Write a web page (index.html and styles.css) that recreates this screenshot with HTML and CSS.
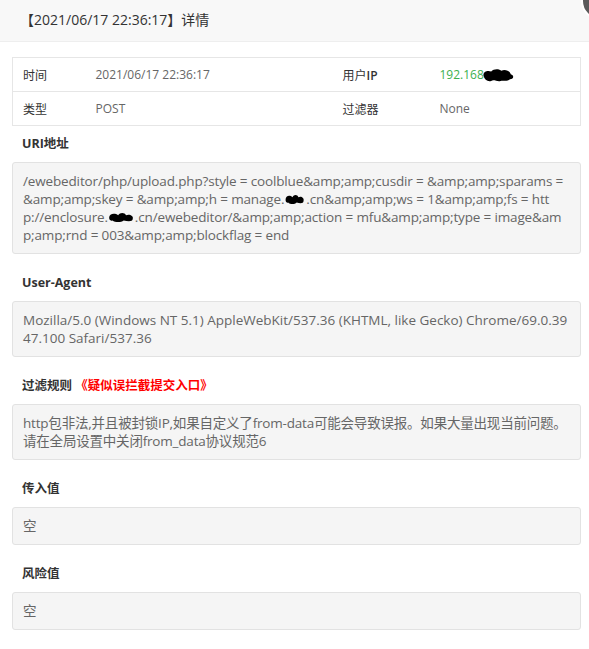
FILE: index.html
```html
<!DOCTYPE html>
<html lang="zh-CN">
<head>
    <meta charset="UTF-8">
    <meta name="viewport" content="width=device-width, initial-scale=1.0">
    <title>详情</title>
    <link rel="stylesheet" href="styles.css">
</head>
<body>
    <div class="layer">
        <div class="layer-title">【2021/06/17 22:36:17】详情</div>
        <span class="layer-close"></span>
        <div class="layer-content">
            <table class="info-table">
                <colgroup>
                    <col class="c1">
                    <col class="c2">
                    <col class="c3">
                    <col class="c4">
                </colgroup>
                <tbody>
                    <tr>
                        <td class="label">时间</td>
                        <td>2021/06/17 22:36:17</td>
                        <td class="label">用户<b>IP</b></td>
                        <td class="ip">192.168<svg class="blot blot-ip" viewBox="0 0 40 16"><path d="M3 9 C2 4 8 2 12 4 C15 0 22 1 24 3 C28 1 34 3 35 7 C39 8 39 13 34 13 C31 16 26 14 23 15 C19 16 15 13 12 15 C8 16 4 14 3 9 Z"/></svg></td>
                    </tr>
                    <tr>
                        <td class="label">类型</td>
                        <td>POST</td>
                        <td class="label">过滤器</td>
                        <td>None</td>
                    </tr>
                </tbody>
            </table>

            <div class="field">
                <div class="field-label">URI地址</div>
                <div class="field-box uri">/ewebeditor/php/upload.php?style = coolblue&amp;amp;amp;cusdir = &amp;amp;amp;sparams = &amp;amp;amp;skey = &amp;amp;amp;h = manage.<svg class="blot" viewBox="0 0 24 14"><path d="M1 8 C1 3 6 2 9 5 C11 1 15 2 16 5 C19 3 23 6 22 9 C22 13 17 12 14 11 C11 14 6 13 4 11 C2 12 1 10 1 8 Z"/></svg>.cn&amp;amp;amp;ws = 1&amp;amp;amp;fs = http://enclosure.<svg class="blot blot-wide" viewBox="0 0 24 14" preserveAspectRatio="none"><path d="M1 8 C1 3 6 2 9 5 C11 1 15 2 16 5 C19 3 23 6 22 9 C22 13 17 12 14 11 C11 14 6 13 4 11 C2 12 1 10 1 8 Z"/></svg>.cn/ewebeditor/&amp;amp;amp;action = mfu&amp;amp;amp;type = image&amp;amp;amp;rnd = 003&amp;amp;amp;blockflag = end</div>
            </div>

            <div class="field">
                <div class="field-label">User-Agent</div>
                <div class="field-box">Mozilla/5.0 (Windows NT 5.1) AppleWebKit/537.36 (KHTML, like Gecko) Chrome/69.0.3947.100 Safari/537.36</div>
            </div>

            <div class="field">
                <div class="field-label">过滤规则 <span class="rule-name">《疑似误拦截提交入口》</span></div>
                <div class="field-box rule-text">http包非法,并且被封锁IP,如果自定义了from-data可能会导致误报。如果大量出现当前问题。请在全局设置中关闭from_data协议规范6</div>
            </div>

            <div class="field">
                <div class="field-label">传入值</div>
                <div class="field-box">空</div>
            </div>

            <div class="field">
                <div class="field-label">风险值</div>
                <div class="field-box">空</div>
            </div>
        </div>
    </div>
</body>
</html>
```

FILE: styles.css
```css
* {
    box-sizing: border-box;
}
body {
    margin: 0;
    background: #fff;
    font-family: "Open Sans", "Noto Sans CJK SC", sans-serif;
    color: #333;
    overflow: hidden;
}
.layer {
    position: relative;
    width: 589px;
}
.layer-title {
    height: 42px;
    line-height: 40px;
    padding: 0 80px 0 20px;
    background: #f8f8f8;
    border-bottom: 1px solid #eee;
    font-size: 14px;
    color: #333;
}
.layer-close {
    position: absolute;
    left: 581px;
    top: -18px;
    width: 38px;
    height: 38px;
    border-radius: 50%;
    background: #5a5a5a;
    border: 2px solid #fff;
}
.layer-content {
    padding: 15px 8px 0 12px;
}
.info-table {
    width: 100%;
    border-collapse: collapse;
    border: 1px solid #e6e6e6;
    font-size: 12px;
    color: #666;
}
.info-table .c1 { width: 73px; }
.info-table .c2 { width: 247px; }
.info-table .c3 { width: 97px; }
.info-table td {
    height: 34px;
    padding: 0 10px;
    border-bottom: 1px solid #e6e6e6;
}
.info-table td.label {
    color: #333;
}
.info-table td.label b {
    font-weight: 600;
}
.info-table td.ip {
    color: #3cb04f;
    white-space: nowrap;
}
.blot {
    display: inline-block;
    width: 22px;
    height: 12px;
    vertical-align: -1px;
    fill: #000;
}
.blot-wide {
    width: 27px;
}
.blot-ip {
    width: 34px;
    height: 16px;
    margin-left: -3px;
    vertical-align: -4px;
}
.field + .field {
    margin-top: 11px;
}
.field-label {
    height: 36px;
    padding: 9px 10px 0;
    font-size: 12.5px;
    line-height: 18px;
    font-weight: 700;
    color: #333;
}
.rule-name {
    color: #f00;
    font-weight: 700;
}
.field-box {
    padding: 9px 10px;
    min-height: 38px;
    background: #f5f5f5;
    border: 1px solid #e2e2e2;
    border-radius: 3px;
    font-size: 13.5px;
    line-height: 18px;
    color: #666;
    word-break: break-all;
}
.field-box.uri {
    letter-spacing: -0.15px;
}
.field-box.rule-text {
    letter-spacing: -0.2px;
}
```
